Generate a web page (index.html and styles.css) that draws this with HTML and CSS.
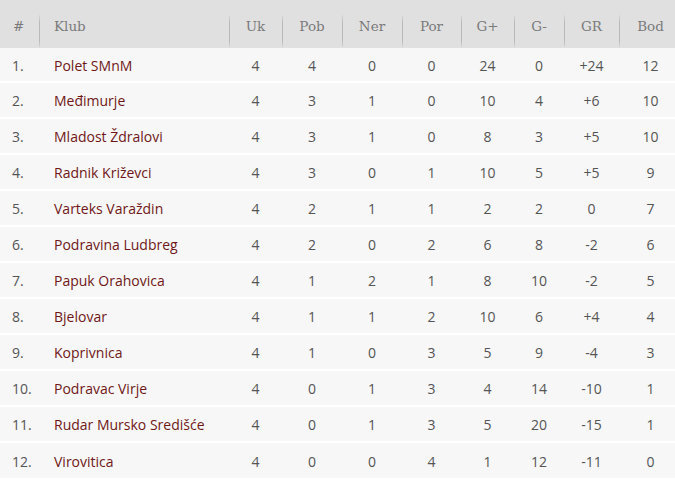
FILE: index.html
```html
<!DOCTYPE html>
<html>
<head>
<meta charset="utf-8">
<link rel="stylesheet" href="styles.css">
</head>
<body>
<table class="standings">
  <colgroup>
    <col class="c-pos"><col class="c-club"><col class="c-uk"><col class="c-pob"><col class="c-ner"><col class="c-por"><col class="c-gp"><col class="c-gm"><col class="c-gr"><col class="c-bod">
  </colgroup>
  <thead>
    <tr>
      <th class="pos">#</th><th class="club">Klub</th><th>Uk</th><th>Pob</th><th>Ner</th><th>Por</th><th>G+</th><th>G-</th><th>GR</th><th>Bod</th>
    </tr>
  </thead>
  <tbody>
    <tr><td class="pos">1.</td><td class="club">Polet SMnM</td><td>4</td><td>4</td><td>0</td><td>0</td><td>24</td><td>0</td><td>+24</td><td>12</td></tr>
    <tr><td class="pos">2.</td><td class="club">Međimurje</td><td>4</td><td>3</td><td>1</td><td>0</td><td>10</td><td>4</td><td>+6</td><td>10</td></tr>
    <tr><td class="pos">3.</td><td class="club">Mladost Ždralovi</td><td>4</td><td>3</td><td>1</td><td>0</td><td>8</td><td>3</td><td>+5</td><td>10</td></tr>
    <tr><td class="pos">4.</td><td class="club">Radnik Križevci</td><td>4</td><td>3</td><td>0</td><td>1</td><td>10</td><td>5</td><td>+5</td><td>9</td></tr>
    <tr><td class="pos">5.</td><td class="club">Varteks Varaždin</td><td>4</td><td>2</td><td>1</td><td>1</td><td>2</td><td>2</td><td>0</td><td>7</td></tr>
    <tr><td class="pos">6.</td><td class="club">Podravina Ludbreg</td><td>4</td><td>2</td><td>0</td><td>2</td><td>6</td><td>8</td><td>-2</td><td>6</td></tr>
    <tr><td class="pos">7.</td><td class="club">Papuk Orahovica</td><td>4</td><td>1</td><td>2</td><td>1</td><td>8</td><td>10</td><td>-2</td><td>5</td></tr>
    <tr><td class="pos">8.</td><td class="club">Bjelovar</td><td>4</td><td>1</td><td>1</td><td>2</td><td>10</td><td>6</td><td>+4</td><td>4</td></tr>
    <tr><td class="pos">9.</td><td class="club">Koprivnica</td><td>4</td><td>1</td><td>0</td><td>3</td><td>5</td><td>9</td><td>-4</td><td>3</td></tr>
    <tr><td class="pos">10.</td><td class="club">Podravac Virje</td><td>4</td><td>0</td><td>1</td><td>3</td><td>4</td><td>14</td><td>-10</td><td>1</td></tr>
    <tr><td class="pos">11.</td><td class="club">Rudar Mursko Središće</td><td>4</td><td>0</td><td>1</td><td>3</td><td>5</td><td>20</td><td>-15</td><td>1</td></tr>
    <tr><td class="pos">12.</td><td class="club">Virovitica</td><td>4</td><td>0</td><td>0</td><td>4</td><td>1</td><td>12</td><td>-11</td><td>0</td></tr>
  </tbody>
</table>
</body>
</html>
```
FILE: styles.css
```css
html, body {
  margin: 0;
  padding: 0;
  background: #ffffff;
}
.standings {
  border-collapse: collapse;
  table-layout: fixed;
  width: 682px;
  font-family: "Open Sans", "Liberation Sans", sans-serif;
  font-size: 14px;
  color: #555555;
}
.c-pos { width: 39px; }
.c-club { width: 190px; }
.c-uk { width: 53px; }
.c-pob { width: 60px; }
.c-ner { width: 60px; }
.c-por { width: 59px; }
.c-gp { width: 53px; }
.c-gm { width: 50px; }
.c-gr { width: 55px; }
.c-bod { width: 63px; }

.standings thead th {
  position: relative;
  height: 48px;
  padding: 0;
  background: #e0e0e0;
  font-family: "DejaVu Serif", "Liberation Serif", serif;
  font-weight: normal;
  font-size: 13.5px;
  color: #7a7a7a;
  text-align: center;
  vertical-align: middle;
  padding-top: 3px;
  box-sizing: border-box;
}
.standings thead th + th::before {
  content: "";
  position: absolute;
  left: 0;
  top: 15px;
  bottom: 1px;
  width: 1px;
  background: linear-gradient(to bottom, rgba(180,180,180,0.2), #b9b9b9 25%, #b9b9b9 80%, rgba(180,180,180,0.3));
}
.standings thead th.pos {
  text-align: left;
  padding-left: 13px;
}
.standings thead th.club {
  text-align: left;
  padding-left: 15px;
}
.standings tbody td {
  height: 36px;
  padding: 0;
  background: #f7f7f7;
  border-top: 2px solid #ffffff;
  text-align: center;
  vertical-align: middle;
  padding-top: 1px;
  box-sizing: border-box;
}
.standings tbody tr:first-child td {
  border-top: 0;
  height: 34px;
}
.standings tbody td.pos {
  text-align: left;
  padding-left: 12px;
}
.standings tbody td.club {
  text-align: left;
  padding-left: 15px;
  color: #701818;
}
```
